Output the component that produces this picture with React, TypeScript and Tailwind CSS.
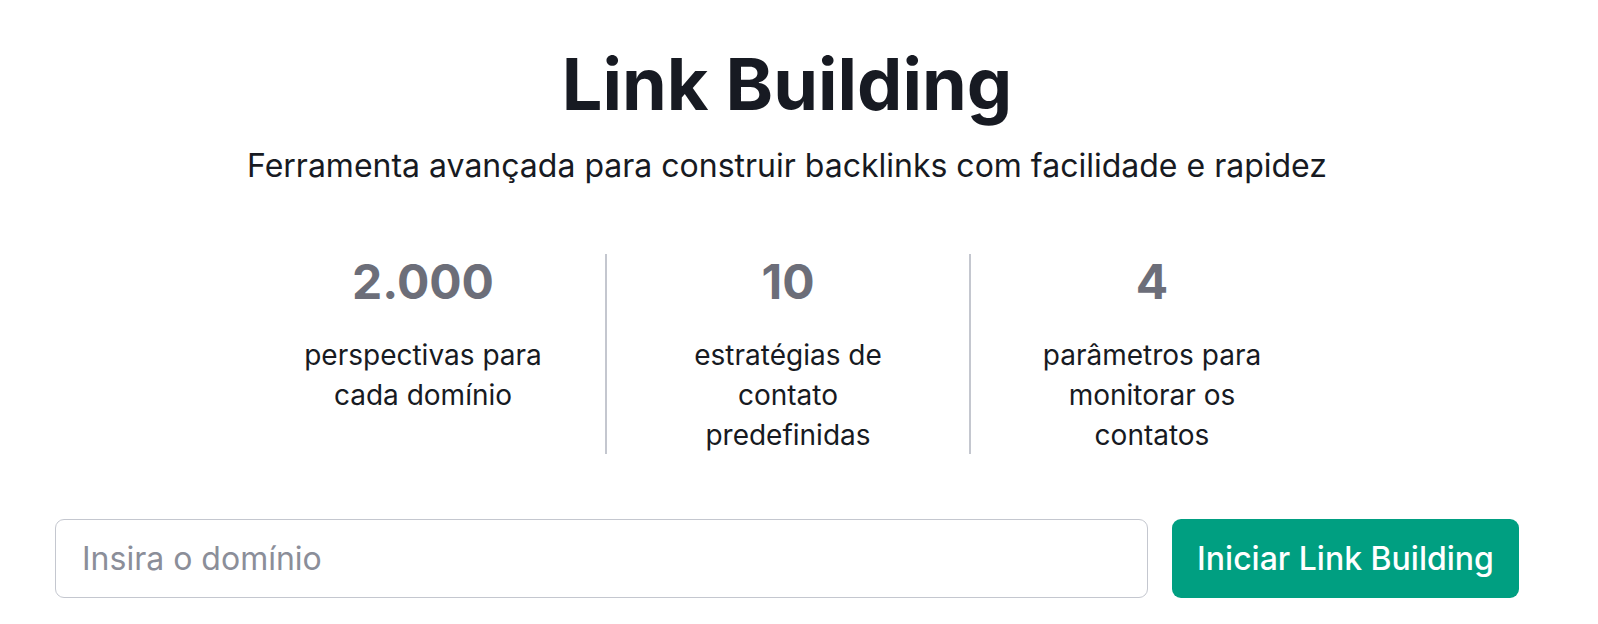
export default function App() {
  const stats = [
    { value: "2.000", label: "perspectivas para cada domínio" },
    { value: "10", label: "estratégias de contato predefinidas" },
    { value: "4", label: "parâmetros para monitorar os contatos" },
  ];

  return (
    <div className="min-h-screen bg-white font-['Inter','Noto_Sans',sans-serif] text-[#171a22]">
      <div className="ml-[55px] w-[1464px] pt-[41px]">
        <h1 className="text-center text-[72px] font-bold leading-[1.2]">
          Link Building
        </h1>
        <p className="mt-[19px] text-center text-[32px] leading-[40px]">
          Ferramenta avançada para construir backlinks com facilidade e rapidez
        </p>

        {/* Stats */}
        <div className="mt-[68px] flex justify-center">
          {stats.map((s, i) => (
            <div
              key={s.value}
              className={
                "flex w-[364px] flex-col items-center " +
                (i > 0 ? "border-l-2 border-[#c4c7cf]" : "")
              }
            >
              <div className="h-[200px] w-full pt-[2px] text-center">
                <div className="text-[48px] font-bold leading-[52px] text-[#6c6e79]">
                  {s.value}
                </div>
                <div className="mx-auto mt-[27px] max-w-[255px] text-[28px] leading-[40px]">
                  {s.label}
                </div>
              </div>
            </div>
          ))}
        </div>

        {/* Search row */}
        <div className="mt-[65px] flex gap-[24px]">
          <input
            type="text"
            placeholder="Insira o domínio"
            className="h-[79px] flex-1 rounded-[9px] border border-[#c4c7cf] bg-white px-[26px] text-[32px] text-[#171a22] outline-none placeholder:text-[#8b8e99]"
          />
          <button className="h-[79px] w-[347px] rounded-[9px] bg-[#009f81] text-[32px] font-medium text-white">
            Iniciar Link Building
          </button>
        </div>
      </div>
    </div>
  );
}
